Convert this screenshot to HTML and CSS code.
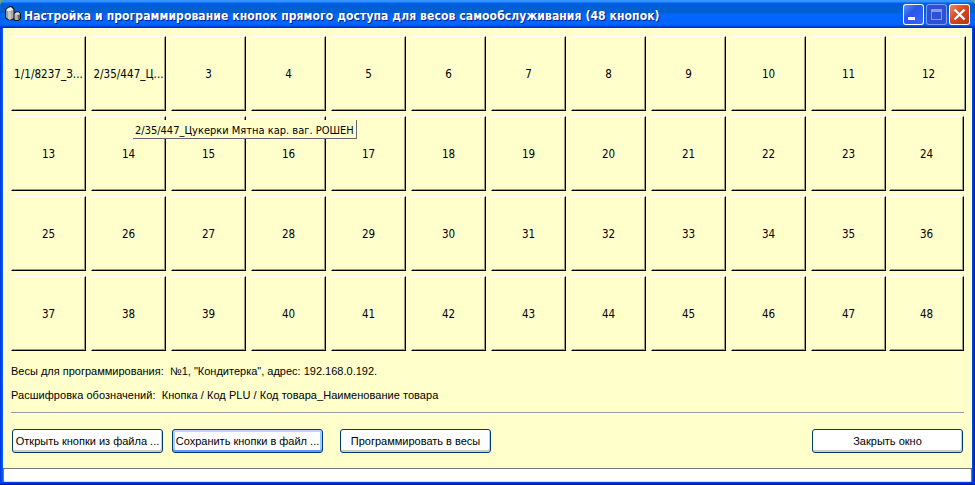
FILE: index.html
```html
<!DOCTYPE html>
<html lang="ru">
<head>
<meta charset="utf-8">
<title>Настройка и программирование кнопок</title>
<link rel="stylesheet" href="styles.css">
</head>
<body>
<div class="window">
  <header class="titlebar">
    <svg class="app-icon" width="16" height="16" viewBox="0 0 16 16">
      <path d="M0 4L2 1.500 5 0h2l2.500 3v10L6 14.500 3 14 0 12z" fill="#111"/>
      <path d="M8.500 8L11 5.500h3L16 8v4.500L13.500 15H10l-1.500-1z" fill="#111"/>
      <path d="M1 4.500L3 6v7l-2-1.500z" fill="#999"/>
      <path d="M3 6l3-1 2-1.500V12l-3 2-2-1z" fill="#c6c6c6"/>
      <path d="M1 4l2-2 3-1 2.500 2.500L6 5 3 6z" fill="#eee"/>
      <path d="M6 5l2.500-1.500V12L6 13.500z" fill="#a8a8a8"/>
      <path d="M9.500 8l2-1.500h2L15 8v4l-2 2h-2.500l-1-1z" fill="#b4b4b4"/>
      <path d="M12.500 9L15 8v4l-2 2z" fill="#666"/><path d="M9.500 8l2-1.500h2L15 8l-2.500 1z" fill="#ddd"/>
    </svg>
    <h1 class="title">Настройка и программирование кнопок прямого доступа для весов самообслуживания (48 кнопок)</h1>
    <div class="controls">
      <span class="ctl"><svg width="21" height="21" viewBox="0 0 21 21"><path d="M5 13h7v3H5z" fill="#fff"/></svg></span>
      <span class="ctl ctl-off"><svg width="21" height="21" viewBox="0 0 21 21"><path d="M5 5h11v11H5zM6 8v7h9V8z" fill="#8a9be0" fill-rule="evenodd"/></svg></span>
      <span class="ctl ctl-close"><svg width="21" height="21" viewBox="0 0 21 21"><path d="M5.500 5.500l10 10M15.500 5.500l-10 10" stroke="#fff" stroke-width="2.400"/></svg></span>
    </div>
  </header>
  <main class="client">
    <div class="keys">
      <div class="row first"><b class="named">1/1/8237_З...</b><b class="named">2/35/447_Ц...</b><b>3</b><b>4</b><b>5</b><b>6</b><b>7</b><b>8</b><b>9</b><b>10</b><b>11</b><b>12</b></div>
      <div class="row"><b>13</b><b>14</b><b>15</b><b>16</b><b>17</b><b>18</b><b>19</b><b>20</b><b>21</b><b>22</b><b>23</b><b>24</b></div>
      <div class="row"><b>25</b><b>26</b><b>27</b><b>28</b><b>29</b><b>30</b><b>31</b><b>32</b><b>33</b><b>34</b><b>35</b><b>36</b></div>
      <div class="row"><b>37</b><b>38</b><b>39</b><b>40</b><b>41</b><b>42</b><b>43</b><b>44</b><b>45</b><b>46</b><b>47</b><b>48</b></div>
      <div class="tooltip">2/35/447_Цукерки Мятна кар. ваг. РОШЕН</div>
    </div>
    <p class="info"><span>Весы для программирования:&nbsp; №1, "Кондитерка", адрес: 192.168.0.192.</span></p>
    <p class="info"><span class="t-legend">Расшифровка обозначений:&nbsp; Кнопка / Код PLU / Код товара_Наименование товара</span></p>
    <div class="rule"></div>
    <div class="actions">
      <button class="btn">Открыть кнопки из файла ...</button>
      <button class="btn btn-default">Сохранить кнопки в файл ...</button>
      <button class="btn btn-program">Программировать в весы</button>
      <button class="btn btn-end">Закрыть окно</button>
    </div>
  </main>
  <footer class="status"></footer>
</div>
</body>
</html>
```
FILE: styles.css
```css
* { box-sizing: border-box; }
body { margin: 0; background: #5aa58c; overflow: hidden; font: 11px/14px "Liberation Sans", sans-serif; color: #000; }
.window { width: 975px; height: 485px; display: flex; flex-direction: column; padding: 0 3px 3px; border-radius: 7px 7px 0 0;
  background: linear-gradient(#0000, #0000 482px, #0048f0 482px, #0030e0 483px, #001090 485px), linear-gradient(90deg, #0030d8 0, #0066ff 3px, #0050f0 972px, #0018a0 975px); }
.titlebar { height: 28px; margin: 0 -3px; padding: 0 5px; display: flex; align-items: center; border-radius: 7px 7px 0 0;
  background: linear-gradient(#3a96ff 0, #2e90ff 2px, #0060f0 3px, #0058e6 5px, #0060d0 6px, #0060d0 13px, #0066ff 14px, #0066ff 24px, #0052ea 26px, #0030c8 27px, #0030c8 28px); }
.app-icon { display: block; margin-top: 0; }
.title { margin: 3px 0 0 3px; font: bold 12px/16px "DejaVu Sans Condensed", "DejaVu Sans", sans-serif; letter-spacing: .105px; color: #fff; text-shadow: 1px 1px 0 #002090; white-space: nowrap; }
.controls { display: flex; gap: 2px; margin: 1px 0 0 auto; }
.ctl { width: 21px; height: 21px; border-radius: 3px; background: linear-gradient(135deg, #6a94ff, #2858e8 40%, #3a66f8); box-shadow: inset 0 0 0 1px #fff; }
.ctl svg { display: block; }
.ctl-off { background: #2b53d4; box-shadow: inset 0 0 0 1px #7c9cf0; }
.ctl-close { background: linear-gradient(135deg, #f09070, #d84822 45%, #b83210); }
.client { height: 440px; padding: 8px 8px 0; background: #ffffcc; }
.keys { position: relative; display: grid; row-gap: 5px; }
.row { display: grid; grid-template-columns: repeat(11, 80px) 75px; margin-right: -2px; height: 75px; }
.row b { width: 75px; height: 75px; display: flex; align-items: center; justify-content: center; font: 11.5px/14px "DejaVu Sans Condensed", sans-serif; white-space: nowrap;
  border: 1px solid; border-color: #fff #000 #000 #fff; box-shadow: inset -1px -1px 0 #999988; }
.row .named { letter-spacing: .05px; }
.row:not(.first) b:last-child { margin-left: -2px; }
.tooltip { position: absolute; left: 122px; top: 84px; width: 224px; height: 19px; padding: 4px 0 0 2px; font: 11px/14px "DejaVu Sans Condensed", sans-serif; white-space: nowrap;
  background: #ffffcc; border-right: 1px solid #666677; border-bottom: 1px solid #666677; }
.info { margin: 0; height: 14px; white-space: nowrap; }
.keys + .info { margin-top: 13px; }
.info + .info { margin-top: 10px; }
.t-legend { letter-spacing: .04px; }
.rule { margin-top: 10px; height: 2px; background: #9999aa; border-bottom: 1px solid #fff; }
.actions { display: flex; margin: 15px 1px 0; gap: 9px; }
.btn { width: 151px; height: 24px; padding: 0; font: 11px/14px "Liberation Sans", sans-serif; color: #000; white-space: nowrap;
  background: #fff; border: 1px solid #003c74; border-radius: 3px; box-shadow: inset -1px -2px 0 #d0cdbf; }
.btn-default { box-shadow: inset 0 2px 0 #ccccff, inset 0 -2px 0 #6699ee, inset 2px 0 0 #aaccff, inset -2px 0 0 #99ccff; }
.btn-program { margin-left: 8px; }
.btn-end { margin-left: auto; }
.status { height: 14px; background: #fff; border: 1px solid #777; border-bottom-color: #ddd; border-radius: 2px; }
```
